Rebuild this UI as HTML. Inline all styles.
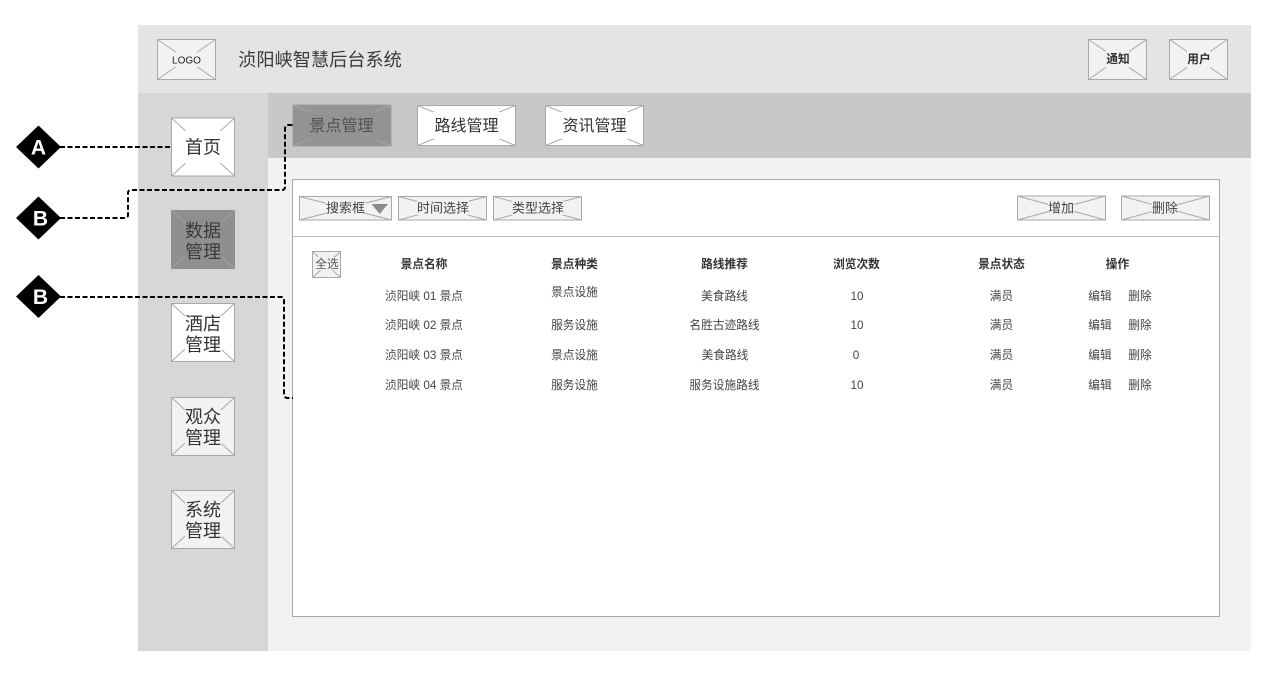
<!DOCTYPE html>
<html lang="zh">
<head>
<meta charset="utf-8">
<title>浈阳峡智慧后台系统</title>
<style>
html,body{margin:0;padding:0;background:#fff;width:1272px;height:673px;overflow:hidden}
svg{display:block}
text{font-family:"Liberation Sans","Noto Sans CJK SC",sans-serif;fill:#333;text-anchor:middle}
.x{stroke:#a8a8a8;stroke-width:1;fill:none}
.b{stroke:#a8a8a8;stroke-width:1}
.t{font-size:11.7px;fill:#444}
.h{font-size:11.7px;font-weight:700;fill:#333}
.s{font-size:18px;fill:#333}
.n{font-size:16px;fill:#333}
.m{font-size:13px;fill:#444}
.l{fill:none;stroke:#000;stroke-width:2;stroke-dasharray:5 2.5}
</style>
</head>
<body>
<svg width="1272" height="673" viewBox="0 0 1272 673" xmlns="http://www.w3.org/2000/svg">
<rect x="138" y="25" width="1113" height="68" fill="#e4e4e4"/>
<rect x="138" y="93" width="130" height="558" fill="#d7d7d7"/>
<rect x="268" y="93" width="983" height="65" fill="#c8c8c8"/>
<rect x="268" y="158" width="983" height="493" fill="#f2f2f2"/>
<rect x="292.5" y="179.5" width="927" height="437" fill="#fff" stroke="#aaa"/>
<line x1="293" y1="236.5" x2="1219" y2="236.5" stroke="#bbb"/>

<!-- header -->
<rect class="b" x="157.5" y="39.5" width="58" height="40" fill="#f2f2f2"/>
<path class="x" d="M157.5 39.5L215.5 79.5M215.5 39.5L157.5 79.5"/>
<rect x="176" y="52" width="21" height="15" fill="#f2f2f2"/>
<text x="186.500" y="63.500" style="font-size:10px;fill:#222">LOGO</text>
<text x="320" y="66" style="font-size:18.200px;fill:#3a3a3a">浈阳峡智慧后台系统</text>

<rect class="b" x="1088.500" y="39.500" width="58" height="40" fill="#f2f2f2"/>
<path class="x" d="M1088.500 39.500L1146.500 79.500M1146.500 39.500L1088.500 79.500"/>
<rect x="1106" y="51" width="23" height="17" fill="#f2f2f2"/>
<text x="1118" y="63" style="font-size:11.700px;font-weight:700">通知</text>
<rect class="b" x="1169.500" y="39.500" width="58" height="40" fill="#f2f2f2"/>
<path class="x" d="M1169.500 39.500L1227.500 79.500M1227.500 39.500L1169.500 79.500"/>
<rect x="1187" y="51" width="23" height="17" fill="#f2f2f2"/>
<text x="1199" y="63" style="font-size:11.700px;font-weight:700">用户</text>

<!-- sidebar -->
<rect class="b" x="171.500" y="118" width="63" height="58" fill="#fff"/>
<path class="x" d="M171.500 118L234.500 176M234.500 118L171.500 176"/>
<rect x="185" y="131" width="37" height="32" fill="#fff"/>
<text class="s" x="203" y="153.500">首页</text>

<rect x="171" y="210" width="64" height="59" fill="#8f8f8f"/>
<path d="M171 210L235 269M235 210L171 269" stroke="#a3a3a3" fill="none"/>
<rect x="185" y="222" width="37" height="35" fill="#8f8f8f"/>
<text class="s" x="203" y="237" style="fill:#3a3a3a">数据</text>
<text class="s" x="203" y="258" style="fill:#3a3a3a">管理</text>

<rect class="b" x="171.500" y="303.500" width="63" height="58" fill="#fff"/>
<path class="x" d="M171.500 303.500L234.500 361.500M234.500 303.500L171.500 361.500"/>
<rect x="185" y="316" width="37" height="34" fill="#fff"/>
<text class="s" x="203" y="330">酒店</text>
<text class="s" x="203" y="351">管理</text>

<rect class="b" x="171.500" y="397.500" width="63" height="58" fill="#f2f2f2"/>
<path class="x" d="M171.500 397.500L234.500 455.500M234.500 397.500L171.500 455.500"/>
<rect x="185" y="410" width="37" height="34" fill="#f2f2f2"/>
<text class="s" x="203" y="423">观众</text>
<text class="s" x="203" y="444">管理</text>

<rect class="b" x="171.500" y="490.500" width="63" height="58" fill="#f2f2f2"/>
<path class="x" d="M171.500 490.500L234.500 548.500M234.500 490.500L171.500 548.500"/>
<rect x="185" y="503" width="37" height="34" fill="#f2f2f2"/>
<text class="s" x="203" y="516">系统</text>
<text class="s" x="203" y="537">管理</text>

<!-- tabs -->
<rect x="293" y="105" width="98" height="41" fill="#939393" stroke="#9e9e9e"/>
<path d="M293 105L391 146M391 105L293 146" stroke="#a6a6a6" fill="none"/>
<rect x="309" y="112" width="65" height="27" fill="#939393"/>
<text class="n" x="341.500" y="131" style="fill:#505050">景点管理</text>

<rect class="b" x="417.500" y="105.500" width="98" height="40" fill="#fff"/>
<path class="x" d="M417.500 105.500L515.500 145.500M515.500 105.500L417.500 145.500"/>
<rect x="433" y="112" width="67" height="27" fill="#fff"/>
<text class="n" x="466.500" y="131">路线管理</text>

<rect class="b" x="545.500" y="105.500" width="98" height="40" fill="#fff"/>
<path class="x" d="M545.500 105.500L643.500 145.500M643.500 105.500L545.500 145.500"/>
<rect x="561" y="112" width="67" height="27" fill="#fff"/>
<text class="n" x="594.500" y="131">资讯管理</text>

<!-- toolbar -->
<rect class="b" x="299.500" y="196.500" width="92" height="23.500" fill="#f2f2f2"/>
<path class="x" d="M299.500 196.500L391.500 220M391.500 196.500L299.500 220"/>
<rect x="326" y="203" width="45" height="10" fill="#f2f2f2"/>
<text class="m" x="345.500" y="212.500">搜索框</text>
<path d="M371.500 204H388L379.700 214Z" fill="#8c8c8c"/>

<rect class="b" x="398.500" y="196.500" width="88" height="23.500" fill="#f2f2f2"/>
<path class="x" d="M398.500 196.500L486.500 220M486.500 196.500L398.500 220"/>
<rect x="417" y="201" width="52" height="14" fill="#f2f2f2"/>
<text class="m" x="443" y="212.500">时间选择</text>

<rect class="b" x="493.500" y="196.500" width="88" height="23.500" fill="#f2f2f2"/>
<path class="x" d="M493.500 196.500L581.500 220M581.500 196.500L493.500 220"/>
<rect x="512" y="201" width="52" height="14" fill="#f2f2f2"/>
<text class="m" x="538" y="212.500">类型选择</text>

<rect class="b" x="1017.500" y="196" width="88" height="24" fill="#f2f2f2"/>
<path class="x" d="M1017.500 196L1105.500 220M1105.500 196L1017.500 220"/>
<rect x="1048" y="204" width="26" height="8" fill="#f2f2f2"/>
<text class="m" x="1061" y="212.500">增加</text>

<rect class="b" x="1121.500" y="196" width="88" height="24" fill="#f2f2f2"/>
<path class="x" d="M1121.500 196L1209.500 220M1209.500 196L1121.500 220"/>
<rect x="1152" y="204" width="26" height="8" fill="#f2f2f2"/>
<text class="m" x="1165" y="212.500">删除</text>

<rect class="b" x="312.500" y="251.500" width="28" height="26" fill="#f2f2f2"/>
<path class="x" d="M312.500 251.500L340.500 277.500M340.500 251.500L312.500 277.500"/>
<rect x="315" y="257" width="24" height="13" fill="#f2f2f2"/>
<text x="327" y="268" style="font-size:11.700px;fill:#555">全选</text>

<!-- table head -->
<text class="h" x="424" y="268">景点名称</text>
<text class="h" x="574.500" y="268">景点种类</text>
<text class="h" x="724.500" y="268">路线推荐</text>
<text class="h" x="856.500" y="268">浏览次数</text>
<text class="h" x="1001.500" y="268">景点状态</text>
<text class="h" x="1117.500" y="268">操作</text>

<!-- rows -->
<text class="t" x="424" y="300">浈阳峡 01 景点</text>
<text class="t" x="574.500" y="296">景点设施</text>
<text class="t" x="724.500" y="300">美食路线</text>
<text class="t" x="857" y="300">10</text>
<text class="t" x="1001.500" y="300">满员</text>
<text class="t" x="1100" y="300">编辑</text>
<text class="t" x="1140" y="300">删除</text>

<text class="t" x="424" y="329">浈阳峡 02 景点</text>
<text class="t" x="574.500" y="329">服务设施</text>
<text class="t" x="724.500" y="329">名胜古迹路线</text>
<text class="t" x="857" y="329">10</text>
<text class="t" x="1001.500" y="329">满员</text>
<text class="t" x="1100" y="329">编辑</text>
<text class="t" x="1140" y="329">删除</text>

<text class="t" x="424" y="359">浈阳峡 03 景点</text>
<text class="t" x="574.500" y="359">景点设施</text>
<text class="t" x="725" y="359">美食路线</text>
<text class="t" x="856" y="359">0</text>
<text class="t" x="1001.500" y="359">满员</text>
<text class="t" x="1100" y="359">编辑</text>
<text class="t" x="1140" y="359">删除</text>

<text class="t" x="424" y="389">浈阳峡 04 景点</text>
<text class="t" x="574.500" y="389">服务设施</text>
<text class="t" x="724.500" y="389">服务设施路线</text>
<text class="t" x="857" y="389">10</text>
<text class="t" x="1001.500" y="389">满员</text>
<text class="t" x="1100" y="389">编辑</text>
<text class="t" x="1140" y="389">删除</text>

<!-- connectors -->
<path class="l" d="M60 147H171"/>
<path class="l" d="M60 218H125Q128 218 128 215V193Q128 190 131 190H282Q285 190 285 187V129Q285 125 289 125H293"/>
<path class="l" d="M60 297H281Q284 297 284 300V394Q284 398 288 398H293"/>

<!-- markers -->
<path d="M38.500 125.500L61 147L38.500 168.500L16 147Z" fill="#000"/>
<text x="38.500" y="154.500" style="font-size:21px;font-weight:700;fill:#fff">A</text>
<path d="M38.500 196.500L61 218L38.500 239.500L16 218Z" fill="#000"/>
<text x="40.500" y="225.500" style="font-size:21px;font-weight:700;fill:#fff">B</text>
<path d="M38.500 275L61 296.500L38.500 318L16 296.500Z" fill="#000"/>
<text x="40.500" y="304" style="font-size:21px;font-weight:700;fill:#fff">B</text>
</svg>
</body>
</html>
